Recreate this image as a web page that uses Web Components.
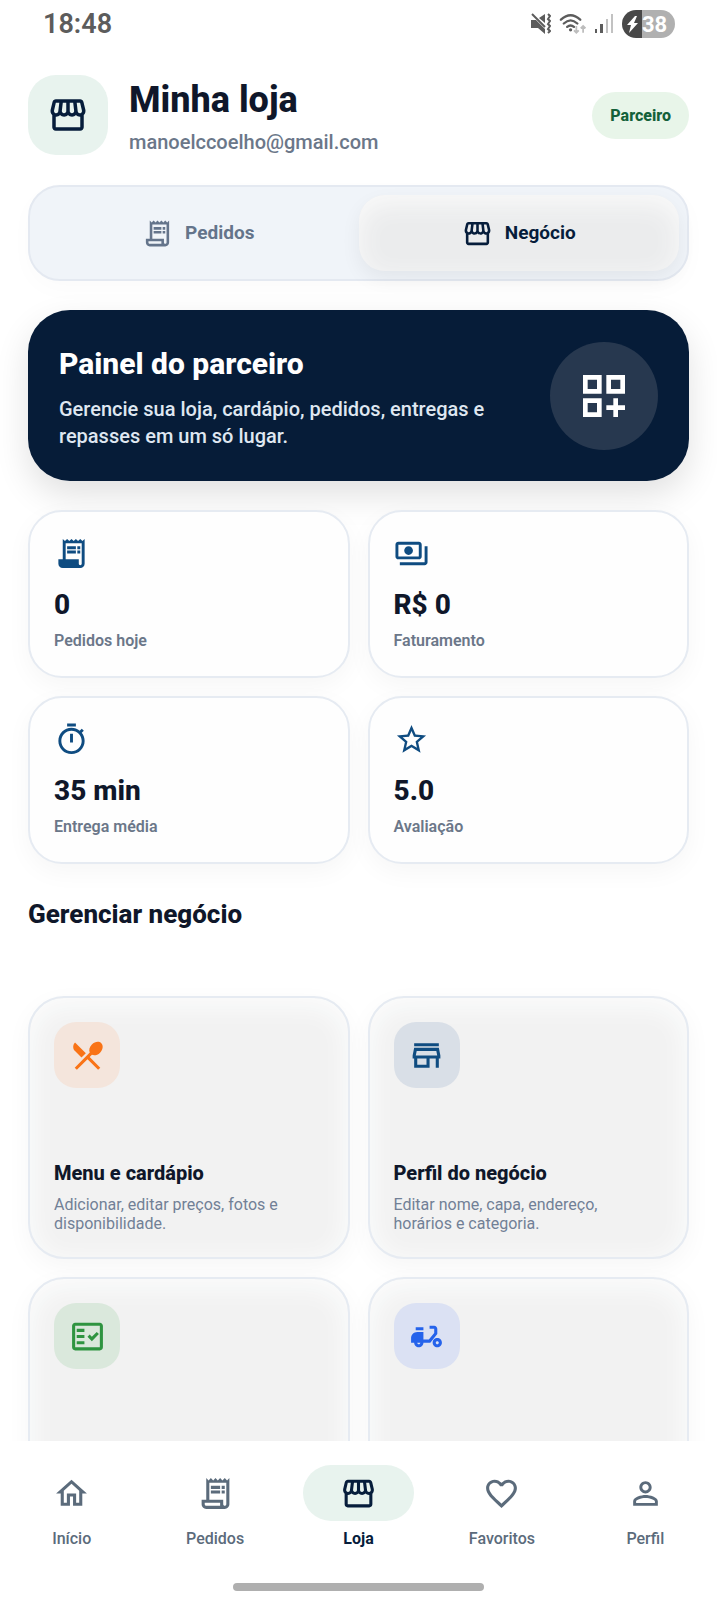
<!DOCTYPE html>
<html lang="pt-BR">
<head>
<meta charset="utf-8">
<meta name="viewport" content="width=device-width, initial-scale=1">
<title>Minha loja</title>
<style>
    body {
        margin: 0;
        background: #ffffff;
        color: #0f172a;
        font-family: Roboto, "Liberation Sans", sans-serif;
    }
</style>
</head>
<body>
<store-app>
    <status-bar slot="status" time="18:48" battery="38"></status-bar>

    <store-header email="manoelccoelho@gmail.com" badge="Parceiro">Minha loja</store-header>

    <segment-bar>
        <segment-tab icon="receipt">Pedidos</segment-tab>
        <segment-tab icon="storefront" active>Negócio</segment-tab>
    </segment-bar>

    <hero-panel icon="dashboard">
        <span slot="title">Painel do parceiro</span>
        Gerencie sua loja, cardápio, pedidos, entregas e repasses em um só lugar.
    </hero-panel>

    <card-grid>
        <stat-card icon="receipt-fill" value="0">Pedidos hoje</stat-card>
        <stat-card icon="payments" value="R$ 0">Faturamento</stat-card>
        <stat-card icon="timer" value="35 min">Entrega média</stat-card>
        <stat-card icon="star" value="5.0">Avaliação</stat-card>
    </card-grid>

    <section-title>Gerenciar negócio</section-title>

    <card-grid>
        <action-card icon="restaurant" style="--tint: #f97316; --tile: #f4e5dc">
            <span slot="title">Menu e cardápio</span>
            Adicionar, editar preços, fotos e disponibilidade.
        </action-card>
        <action-card icon="store" style="--tint: #0f4c81; --tile: #d9dfe7">
            <span slot="title">Perfil do negócio</span>
            Editar nome, capa, endereço, horários e categoria.
        </action-card>
        <action-card icon="checklist" label="Pedidos" style="--tint: #2e9440; --tile: #dae8dc"></action-card>
        <action-card icon="moped" label="Entregas" style="--tint: #2563eb; --tile: #dbe1f3"></action-card>
    </card-grid>

    <bottom-nav slot="nav">
        <nav-item icon="home">Início</nav-item>
        <nav-item icon="receipt">Pedidos</nav-item>
        <nav-item icon="storefront" active>Loja</nav-item>
        <nav-item icon="heart">Favoritos</nav-item>
        <nav-item icon="person">Perfil</nav-item>
    </bottom-nav>
</store-app>

<script>
const receiptLines = 'M9 7h6v2H9z M16 7h2v2h-2z M9 10h6v2H9z M16 10h2v2h-2z';

// 24x24 paths
const icons = {
    'storefront': 'M21.9 8.89l-1.05-4.37c-.22-.9-1-1.52-1.91-1.52H5.05c-.9 0-1.69.63-1.9 1.52L2.1 8.89c-.24 1.02-.02 2.06.62 2.88.08.11.19.19.28.29V19c0 1.1.9 2 2 2h14c1.1 0 2-.9 2-2v-6.94c.09-.09.2-.18.28-.28.64-.82.87-1.87.62-2.89zm-2.99-3.9l1.05 4.37c.1.42.01.84-.25 1.17-.14.18-.44.47-.94.47-.61 0-1.14-.49-1.21-1.14L16.98 5l1.93-.01zM13 5h1.96l.54 4.52c.05.39-.07.78-.33 1.07-.22.26-.54.41-.95.41-.67 0-1.22-.59-1.22-1.31V5zM8.49 9.52L9.04 5H11v4.69c0 .72-.55 1.31-1.29 1.31-.34 0-.65-.15-.89-.41-.25-.29-.37-.68-.33-1.07zm-4.45-.16L5.05 5h1.97l-.58 4.86c-.08.65-.6 1.14-1.21 1.14-.49 0-.8-.29-.93-.47-.27-.32-.36-.75-.26-1.17zM5 19v-6.03c.08.01.15.03.23.03.87 0 1.66-.36 2.24-.95.6.6 1.4.95 2.31.95.87 0 1.65-.36 2.23-.93.59.57 1.39.93 2.29.93.84 0 1.64-.35 2.24-.95.58.59 1.37.95 2.24.95.08 0 .15-.02.23-.03V19H5z',
    'receipt': 'M19.5 3.5L18 2l-1.5 1.5L15 2l-1.5 1.5L12 2l-1.5 1.5L9 2 7.5 3.5 6 2v14H3v3c0 1.66 1.34 3 3 3h12c1.66 0 3-1.34 3-3V2l-1.5 1.5zM15 20H6c-.55 0-1-.45-1-1v-1h10v2zm4-1c0 .55-.45 1-1 1s-1-.45-1-1v-3H8V5h11v14z ' + receiptLines,
    'receipt-fill': 'M19.5 3.5L18 2l-1.5 1.5L15 2l-1.5 1.5L12 2l-1.5 1.5L9 2 7.5 3.5 6 2v14H3v3c0 1.66 1.34 3 3 3h12c1.66 0 3-1.34 3-3V2l-1.5 1.5zM19 19c0 .55-.45 1-1 1s-1-.45-1-1v-3H8V5h11v14z ' + receiptLines,
    'dashboard': 'M3 11h8V3H3v8zm2-6h4v4H5V5z M13 3v8h8V3h-8zm6 6h-4V5h4v4z M3 21h8v-8H3v8zm2-6h4v4H5v-4z M18 13h-2v3h-3v2h3v3h2v-3h3v-2h-3z',
    'payments': 'M19 14V6c0-1.1-.9-2-2-2H3c-1.1 0-2 .9-2 2v8c0 1.1.9 2 2 2h14c1.1 0 2-.9 2-2zm-2 0H3V6h14v8zm-7-7c-1.66 0-3 1.34-3 3s1.34 3 3 3 3-1.34 3-3-1.34-3-3-3zm13 0v11c0 1.1-.9 2-2 2H4v-2h17V7h2z',
    'timer': 'M15 1H9v2h6V1zm-4 13h2V8h-2v6zm8.03-6.61l1.42-1.42c-.43-.51-.9-.99-1.41-1.41l-1.42 1.42C16.07 4.74 14.12 4 12 4c-4.97 0-9 4.03-9 9s4.02 9 9 9 9-4.03 9-9c0-2.12-.74-4.07-1.97-5.61zM12 20c-3.87 0-7-3.13-7-7s3.13-7 7-7 7 3.13 7 7-3.13 7-7 7z',
    'star': 'M22 9.24l-7.19-.62L12 2 9.19 8.63 2 9.24l5.46 4.73L5.82 21 12 17.27 18.18 21l-1.63-7.03L22 9.24zM12 15.4l-3.76 2.27 1-4.28-3.32-2.88 4.38-.38L12 6.1l1.71 4.04 4.38.38-3.32 2.88 1 4.28L12 15.4z',
    'restaurant': 'M8.1 13.34l2.83-2.83L3.91 3.5c-1.56 1.56-1.56 4.09 0 5.66l4.19 4.18zm6.78-1.81c1.53.71 3.68.21 5.27-1.38 1.91-1.91 2.28-4.65.81-6.12-1.46-1.46-4.2-1.1-6.12.81-1.59 1.59-2.09 3.74-1.38 5.27L3.7 19.87l1.41 1.41L12 14.41l6.88 6.88 1.41-1.41L13.41 13l1.47-1.47z',
    'store': 'M18.36 9l.6 3H5.04l.6-3h12.72M20 4H4v2h16V4zm0 3H4l-1 5v2h1v6h10v-6h4v6h2v-6h1v-2l-1-5zM6 18v-4h6v4H6z',
    'checklist': 'M20 3H4c-1.1 0-2 .9-2 2v14c0 1.1.9 2 2 2h16c1.1 0 2-.9 2-2V5c0-1.1-.9-2-2-2zm0 16H4V5h16v14z M19.41 10.42L17.99 9l-3.17 3.17-1.41-1.42L12 12.16 14.82 15z M5 7h5v2H5z M5 11h5v2H5z M5 15h5v2H5z',
    'moped': 'M19 7c0-1.1-.9-2-2-2h-3v2h3v2.65L13.52 14H10V9H6c-2.21 0-4 1.79-4 4v3h2c0 1.66 1.34 3 3 3s3-1.34 3-3h4.48L19 10.35V7zM7 17c-.55 0-1-.45-1-1h2c0 .55-.45 1-1 1z M5 6h5v2H5z M19 13c-1.66 0-3 1.34-3 3s1.34 3 3 3 3-1.34 3-3-1.34-3-3-3zm0 4c-.55 0-1-.45-1-1s.45-1 1-1 1 .45 1 1-.45 1-1 1z',
    'home': 'M12 5.69l5 4.5V18h-2v-6H9v6H7v-7.81l5-4.5M12 3L2 12h3v8h6v-6h2v6h6v-8h3L12 3z',
    'heart': 'M16.5 3c-1.74 0-3.41.81-4.5 2.09C10.91 3.81 9.24 3 7.5 3 4.42 3 2 5.42 2 8.5c0 3.78 3.4 6.86 8.55 11.54L12 21.35l1.45-1.32C18.6 15.36 22 12.28 22 8.5 22 5.42 19.58 3 16.5 3zm-4.4 15.55l-.1.1-.1-.1C7.14 14.24 4 11.39 4 8.5 4 6.5 5.5 5 7.5 5c1.54 0 3.04.99 3.57 2.36h1.87C13.46 5.99 14.96 5 16.5 5c2 0 3.5 1.5 3.5 3.5 0 2.89-3.14 5.74-7.9 10.05z',
    'person': 'M12 5.9c1.16 0 2.1.94 2.1 2.1s-.94 2.1-2.1 2.1S9.9 9.16 9.9 8s.94-2.1 2.1-2.1m0 9c2.97 0 6.1 1.46 6.1 2.1v1.1H5.9V17c0-.64 3.13-2.1 6.1-2.1M12 4C9.79 4 8 5.79 8 8s1.79 4 4 4 4-1.79 4-4-1.79-4-4-4zm0 9c-2.67 0-8 1.34-8 4v3h16v-3c0-2.66-5.33-4-8-4z'
};

class BaseElement extends HTMLElement {
    constructor () {
        super();
        this._shadow = this.attachShadow({ mode: 'open' });
    }

    connectedCallback () {
        this._shadow.innerHTML = this.render();
    }

    attr (name) {
        return this.getAttribute(name) || '';
    }
}

class UiIcon extends BaseElement {
    render () {
        return `
            <style>
                :host { display: block; flex: none; width: var(--size, 37px); height: var(--size, 37px); }
                svg { display: block; width: 100%; height: 100%; fill: currentColor; fill-rule: evenodd; }
            </style>
            <svg viewBox="0 0 24 24" aria-hidden="true"><path d="${icons[this.attr('name')]}"/></svg>
        `;
    }
}

class StoreApp extends BaseElement {
    render () {
        return `
            <style>
                :host { display: flex; flex-direction: column; height: 100vh; }
                main {
                    flex: 1;
                    min-height: 0;
                    overflow-y: auto;
                    scrollbar-width: none;
                    padding: 27px 28px 0;
                }
            </style>
            <slot name="status"></slot>
            <main><slot></slot></main>
            <slot name="nav"></slot>
        `;
    }
}

class StatusBar extends BaseElement {
    render () {
        return `
            <style>
                :host {
                    display: flex;
                    align-items: center;
                    justify-content: space-between;
                    height: 48px;
                    padding: 0 42px 0 43px;
                    color: #5c5c5c;
                }
                .time { font-size: 27px; font-weight: 600; }
                .icons { display: flex; align-items: center; gap: 8px; }
                svg { display: block; }
                .battery {
                    display: flex;
                    align-items: center;
                    gap: 1px;
                    width: 53px;
                    height: 28px;
                    border-radius: 14px;
                    background: linear-gradient(90deg, #484848 38%, #b0b0b0 38%);
                    color: #ffffff;
                    font-size: 22px;
                    font-weight: 700;
                }
            </style>
            <span class="time">${this.attr('time')}</span>
            <div class="icons">
                <svg width="20" height="22" viewBox="0 0 20 22" aria-hidden="true">
                    <path fill="currentColor" d="M0 7h5l9 9v5l-7-6H0zM8 5l6-4v9z"/>
                    <path fill="none" stroke="currentColor" stroke-width="2" d="M1 1l13 13M17 1l2 2-2 3 2 2-2 3 2 2-2 3 2 2-2 2"/>
                </svg>
                <svg width="27" height="22" viewBox="0 0 28 22" aria-hidden="true">
                    <path fill="none" stroke="currentColor" stroke-width="2.4" stroke-linecap="round" d="M2 6.500Q12 -2.500 22 6.500M5 10.500Q12 4 19 10.500M8.500 14Q12 11 15.500 14"/>
                    <circle cx="12" cy="17" r="1.700" fill="currentColor"/>
                    <path fill="none" stroke="#bdbdbd" stroke-width="1.800" d="M18 13v7M15.500 17.500L18 20l2.500-2.500M25 20v-7M22.500 15.500L25 13l2.500 2.500"/>
                </svg>
                <svg width="20" height="22" viewBox="0 0 20 22" aria-hidden="true">
                    <path fill="currentColor" d="M1 16h2v4H1zM6 11h3v9H6z"/>
                    <path fill="#c2c2c2" d="M12 6h2v14h-2zM17 1h2v19h-2z"/>
                </svg>
                <div class="battery">
                    <svg width="19" height="20" viewBox="0 0 19 20" aria-hidden="true">
                        <path fill="#ffffff" d="M13 2L5 11h4l-2 8 9-10h-4l3-7z"/>
                    </svg>
                    <span>${this.attr('battery')}</span>
                </div>
            </div>
        `;
    }
}

class StoreHeader extends BaseElement {
    render () {
        return `
            <style>
                :host { display: flex; align-items: center; gap: 21px; }
                .logo {
                    display: grid;
                    place-items: center;
                    width: 80px;
                    height: 80px;
                    border-radius: 28px;
                    background: #e8f3ee;
                    color: #061d3b;
                    --size: 42px;
                }
                .text { flex: 1; padding-top: 2px; }
                h1 { margin: 0; font-size: 36px; line-height: 44px; font-weight: 800; }
                p { margin: 8px 0 0; font-size: 20px; line-height: 24px; font-weight: 500; color: #6b7789; }
                .badge {
                    padding: 12px 18px;
                    border-radius: 24px;
                    background: #e8f5e9;
                    color: #14613a;
                    font-size: 16px;
                    line-height: 23px;
                    font-weight: 800;
                }
            </style>
            <div class="logo"><ui-icon name="storefront"></ui-icon></div>
            <div class="text">
                <h1><slot></slot></h1>
                <p>${this.attr('email')}</p>
            </div>
            <span class="badge">${this.attr('badge')}</span>
        `;
    }
}

class SegmentBar extends BaseElement {
    render () {
        return `
            <style>
                :host {
                    display: flex;
                    margin-top: 30px;
                    padding: 8px;
                    border: 2px solid #e4e9f1;
                    border-radius: 32px;
                    background: #f0f4f9;
                    box-shadow: 0 8px 24px rgba(0, 0, 0, 0.02);
                }
            </style>
            <slot></slot>
        `;
    }
}

class SegmentTab extends BaseElement {
    render () {
        return `
            <style>
                :host { display: block; flex: 1; }
                button {
                    display: flex;
                    align-items: center;
                    justify-content: center;
                    gap: 12px;
                    width: 100%;
                    height: 76px;
                    padding: 0;
                    border: 0;
                    border-radius: 26px;
                    background: none;
                    color: #64748b;
                    font: 700 19px/24px Roboto, "Liberation Sans", sans-serif;
                    cursor: pointer;
                    --size: 31px;
                }
                :host([active]) button {
                    background: #ebeced;
                    color: #061d3b;
                    box-shadow: inset 0 8px 26px #fafafa, 0 8px 20px rgba(0, 0, 0, 0.06);
                }
            </style>
            <button type="button" aria-pressed="${this.hasAttribute('active')}">
                <ui-icon name="${this.attr('icon')}"></ui-icon>
                <slot></slot>
            </button>
        `;
    }
}

class HeroPanel extends BaseElement {
    render () {
        return `
            <style>
                :host {
                    display: flex;
                    align-items: center;
                    gap: 32px;
                    margin-top: 29px;
                    padding: 31px;
                    border-radius: 42px;
                    background: #061c38;
                    color: #dfe7f1;
                    box-shadow: 0 14px 34px rgba(0, 0, 0, 0.12);
                }
                .text { flex: 1; padding-top: 5px; }
                h2 { margin: 0 0 14px; color: #ffffff; font-size: 30px; line-height: 36px; font-weight: 800; }
                p { margin: 0; font-size: 20px; line-height: 27px; font-weight: 500; }
                .disc {
                    display: grid;
                    place-items: center;
                    width: 108px;
                    height: 108px;
                    border-radius: 50%;
                    background: #27384f;
                    color: #ffffff;
                    --size: 56px;
                }
            </style>
            <div class="text">
                <h2><slot name="title"></slot></h2>
                <p><slot></slot></p>
            </div>
            <div class="disc"><ui-icon name="${this.attr('icon')}"></ui-icon></div>
        `;
    }
}

class CardGrid extends BaseElement {
    render () {
        return `
            <style>
                :host {
                    display: grid;
                    grid-template-columns: 1fr 1fr;
                    gap: 18px;
                    margin-top: 29px;
                }
            </style>
            <slot></slot>
        `;
    }
}

class StatCard extends BaseElement {
    render () {
        return `
            <style>
                :host {
                    display: block;
                    padding: 24px;
                    border: 2px solid #e6ebf2;
                    border-radius: 34px;
                    background: #fefefe;
                    box-shadow: 0 8px 26px rgba(0, 0, 0, 0.04);
                }
                ui-icon { --size: 35px; color: #0f4c81; }
                .value { margin-top: 17px; font-size: 28px; line-height: 34px; font-weight: 800; }
                .label { margin-top: 8px; font-size: 16px; line-height: 22px; font-weight: 600; color: #6b7789; }
            </style>
            <ui-icon name="${this.attr('icon')}"></ui-icon>
            <div class="value">${this.attr('value')}</div>
            <div class="label"><slot></slot></div>
        `;
    }
}

class SectionTitle extends BaseElement {
    render () {
        return `
            <style>
                :host { display: block; margin: 34px 0 66px; }
                h2 { margin: 0; font-size: 26px; line-height: 32px; font-weight: 800; }
            </style>
            <h2><slot></slot></h2>
        `;
    }
}

class ActionCard extends BaseElement {
    render () {
        return `
            <style>
                :host { display: block; }
                button {
                    display: flex;
                    flex-direction: column;
                    align-items: flex-start;
                    width: 100%;
                    min-height: 263px;
                    padding: 24px;
                    border: 2px solid #e6ebf2;
                    border-radius: 36px;
                    background: #f2f2f2;
                    box-shadow: inset 0 6px 28px #fdfefe, 0 8px 26px rgba(0, 0, 0, 0.04);
                    color: #0f172a;
                    font-family: Roboto, "Liberation Sans", sans-serif;
                    text-align: left;
                    cursor: pointer;
                }
                .tile {
                    display: grid;
                    place-items: center;
                    width: 66px;
                    height: 66px;
                    border-radius: 22px;
                    background: var(--tile);
                    color: var(--tint);
                }
                .title { margin-top: auto; font-size: 20px; line-height: 24px; font-weight: 800; }
                .text {
                    margin-top: 10px;
                    padding-right: 24px;
                    font-size: 16px;
                    line-height: 19px;
                    font-weight: 400;
                    color: #718096;
                }
            </style>
            <button type="button" ${this.attr('label') ? `aria-label="${this.attr('label')}"` : ''}>
                <span class="tile"><ui-icon name="${this.attr('icon')}"></ui-icon></span>
                <span class="title"><slot name="title"></slot></span>
                <span class="text"><slot></slot></span>
            </button>
        `;
    }
}

class BottomNav extends BaseElement {
    render () {
        return `
            <style>
                :host { display: block; background: #ffffff; padding: 24px 0 9px; }
                nav { display: flex; }
                .handle { width: 35%; height: 8px; margin: 33px auto 0; border-radius: 4px; background: #afafaf; }
            </style>
            <nav><slot></slot></nav>
            <div class="handle"></div>
        `;
    }
}

class NavItem extends BaseElement {
    render () {
        return `
            <style>
                :host { display: block; flex: 1; }
                a {
                    display: flex;
                    flex-direction: column;
                    align-items: center;
                    gap: 6px;
                    color: #5b6b7b;
                    font-size: 16px;
                    line-height: 23px;
                    font-weight: 500;
                    text-decoration: none;
                }
                .pill { display: grid; place-items: center; width: 111px; height: 56px; border-radius: 28px; }
                :host([active]) a { color: #061d3b; font-weight: 700; }
                :host([active]) .pill { background: #e8f3ee; }
            </style>
            <a href="#">
                <span class="pill"><ui-icon name="${this.attr('icon')}"></ui-icon></span>
                <slot></slot>
            </a>
        `;
    }
}

customElements.define('ui-icon', UiIcon);
customElements.define('store-app', StoreApp);
customElements.define('status-bar', StatusBar);
customElements.define('store-header', StoreHeader);
customElements.define('segment-bar', SegmentBar);
customElements.define('segment-tab', SegmentTab);
customElements.define('hero-panel', HeroPanel);
customElements.define('card-grid', CardGrid);
customElements.define('stat-card', StatCard);
customElements.define('section-title', SectionTitle);
customElements.define('action-card', ActionCard);
customElements.define('bottom-nav', BottomNav);
customElements.define('nav-item', NavItem);
</script>
</body>
</html>
